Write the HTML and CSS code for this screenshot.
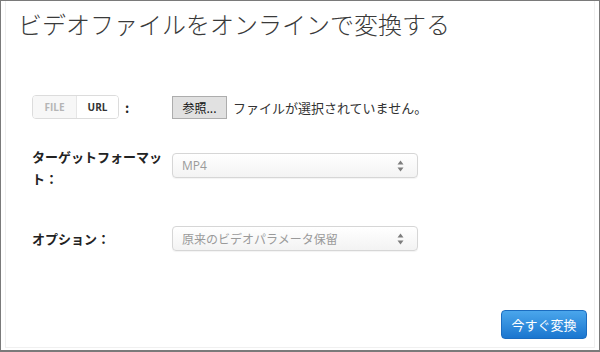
FILE: index.html
```html
<!DOCTYPE html>
<html lang="ja">
<head>
  <meta charset="UTF-8">
  <meta name="viewport" content="width=device-width, initial-scale=1.0">
  <title>ビデオファイルをオンラインで変換する</title>
  <link rel="stylesheet" href="styles.css">
</head>
<body>
  <div class="frame">
    <div class="panel">
      <h1 class="title">ビデオファイルをオンラインで変換する</h1>

      <div class="form">
        <div class="row row-source">
          <div class="label">
            <div class="toggle">
              <span class="seg seg-off">FILE</span>
              <span class="seg seg-on">URL</span>
            </div>
            <span class="colon">:</span>
          </div>
          <div class="control">
            <span class="browse">参照...</span>
            <span class="nofile">ファイルが選択されていません。</span>
          </div>
        </div>

        <div class="row row-format">
          <div class="label label-bold">ターゲットフォーマット：</div>
          <div class="control control-top">
            <div class="select">
              <span class="select-text latin">MP4</span>
              <svg class="arrows" width="7" height="12" viewBox="0 0 7 12">
                <path d="M3.5 0.5 L6.5 4.5 L0.5 4.5 Z" fill="#7d7d7d"/>
                <path d="M0.5 7.5 L6.5 7.5 L3.5 11.5 Z" fill="#7d7d7d"/>
              </svg>
            </div>
          </div>
        </div>

        <div class="row row-option">
          <div class="label label-bold">オプション：</div>
          <div class="control">
            <div class="select">
              <span class="select-text">原来のビデオパラメータ保留</span>
              <svg class="arrows" width="7" height="12" viewBox="0 0 7 12">
                <path d="M3.5 0.5 L6.5 4.5 L0.5 4.5 Z" fill="#7d7d7d"/>
                <path d="M0.5 7.5 L6.5 7.5 L3.5 11.5 Z" fill="#7d7d7d"/>
              </svg>
            </div>
          </div>
        </div>
      </div>

      <div class="actions">
        <button class="convert">今すぐ変換</button>
      </div>
    </div>
  </div>
</body>
</html>
```

FILE: styles.css
```css
html, body {
  margin: 0;
  padding: 0;
  background-color: #fff;
}
body {
  font-family: "Noto Sans CJK JP", "Noto Sans", sans-serif;
  color: #333;
}
.frame {
  width: 600px;
  height: 352px;
  box-sizing: border-box;
  border: 1px solid #7a7a7a;
  border-bottom-width: 2px;
  padding: 0 4px 2px 4px;
}
.panel {
  height: 100%;
  box-sizing: border-box;
  border-left: 1px solid #f0f0f0;
  border-right: 1px solid #f0f0f0;
  border-bottom: 1px solid #f0f0f0;
  display: flex;
  flex-direction: column;
  padding-left: 12px;
}
.title {
  margin: 6px 0 0 0;
  font-size: 24px;
  line-height: 34px;
  font-weight: 300;
  color: #3a3a3a;
}
.form {
  margin-top: 54px;
  padding-left: 14px;
}
.row {
  display: flex;
  align-items: center;
}
.label {
  width: 140px;
  flex: none;
  display: flex;
  align-items: center;
}
.label-bold {
  display: block;
  font-size: 13px;
  font-weight: bold;
  line-height: 22px;
  color: #222;
  padding-right: 10px;
  box-sizing: border-box;
  width: 140px;
}
.control {
  display: flex;
  align-items: center;
}
.toggle {
  display: flex;
  height: 24px;
  box-sizing: border-box;
  border: 1px solid #dcdcdc;
  border-radius: 4px;
  overflow: hidden;
  font-family: "Open Sans", sans-serif;
  font-size: 10px;
  font-weight: bold;
}
.seg {
  display: flex;
  align-items: center;
  justify-content: center;
}
.seg-off {
  width: 43px;
  background-color: #f7f7f7;
  color: #b5b5b5;
  border-right: 1px solid #e6e6e6;
}
.seg-on {
  width: 41px;
  background-color: #fff;
  color: #333;
}
.colon {
  margin-left: 6px;
  font-weight: bold;
  font-size: 13px;
  color: #222;
}
.browse {
  width: 55px;
  height: 23px;
  box-sizing: border-box;
  border: 1px solid #adadad;
  background-color: #e1e1e1;
  font-size: 12px;
  line-height: 21px;
  text-align: center;
  color: #111;
}
.nofile {
  margin-left: 6px;
  font-size: 13px;
  color: #333;
}
.row-format {
  margin-top: 27px;
  align-items: flex-start;
}
.control-top {
  margin-top: 7px;
}
.row-option {
  margin-top: 36px;
}
.select {
  width: 246px;
  height: 25px;
  box-sizing: border-box;
  border: 1px solid #d6d6d6;
  border-radius: 4px;
  background: linear-gradient(#ffffff, #f3f3f3);
  box-shadow: 0 1px 1px rgba(0, 0, 0, 0.05);
  display: flex;
  align-items: center;
  justify-content: space-between;
  padding: 0 13px 0 9px;
}
.select-text {
  font-size: 12px;
  color: #9a9a9a;
}
.select-text.latin {
  font-family: "Open Sans", sans-serif;
  font-size: 12px;
}
.actions {
  margin-top: auto;
  display: flex;
  justify-content: flex-end;
  padding: 0 7px 8px 0;
}
.convert {
  width: 86px;
  height: 29px;
  border: 1px solid #1b6cc0;
  border-radius: 4px;
  background: linear-gradient(#4aa6ec, #1b76cf);
  color: #fff;
  font-family: "Noto Sans CJK JP", sans-serif;
  font-size: 13px;
  padding: 0;
}
```
